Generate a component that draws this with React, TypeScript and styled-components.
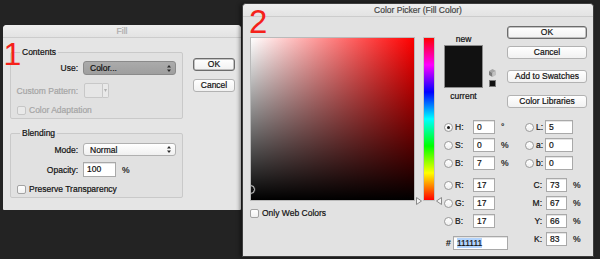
import * as React from 'react';
import styled, { createGlobalStyle } from 'styled-components';

const GlobalStyle = createGlobalStyle`
  html, body {
    margin: 0;
    padding: 0;
    background: #222;
  }
  body {
    font-family: 'Liberation Sans', Arial, sans-serif;
    font-size: 8.5px;
    color: #111111;
    -webkit-text-stroke: 0.2px currentColor;
  }
  * {
    box-sizing: border-box;
  }
`;

const Desktop = styled.div`
  position: relative;
  width: 600px;
  height: 259px;
  overflow: hidden;
  background: #232323;
`;

const Window = styled.div<{ $x: number; $y: number; $w: number; $h: number; $front?: boolean }>`
  position: absolute;
  left: ${p => p.$x}px;
  top: ${p => p.$y}px;
  width: ${p => p.$w}px;
  height: ${p => p.$h}px;
  display: flex;
  flex-direction: column;
  background: ${p => (p.$front ? '#e2e2e2' : '#e5e5e5')};
  border: ${p => (p.$front ? '1px solid #3e3e3e' : 'none')};
  border-radius: 4px 4px 1px 1px;
  box-shadow: ${p => (p.$front ? '-2px 0 4px rgba(0, 0, 0, 0.45)' : 'none')};
`;

const TitleBar = styled.div<{ $h: number; $dim?: boolean }>`
  flex: none;
  height: ${p => p.$h}px;
  line-height: ${p => p.$h - 1}px;
  text-align: center;
  color: ${p => (p.$dim ? '#ababab' : '#464646')};
  background: linear-gradient(#eeeeee, #e3e3e3);
  border-bottom: 1px solid #cccccc;
  border-radius: 4px 4px 0 0;
`;

const Annotation = styled.div<{ $x: number; $y: number; $size: number }>`
  position: absolute;
  left: ${p => p.$x}px;
  top: ${p => p.$y}px;
  font-size: ${p => p.$size}px;
  line-height: 1;
  color: #f5211a;
  -webkit-text-stroke: 0;
`;

/* ---------- shared controls ---------- */

const PushButton = styled.div<{ $primary?: boolean; $mt?: number }>`
  height: 13px;
  margin-top: ${p => p.$mt ?? 0}px;
  line-height: 11px;
  text-align: center;
  background: linear-gradient(#ffffff, #f1f1f1);
  border: 1px solid ${p => (p.$primary ? '#6c6c6c' : '#b2b2b2')};
  box-shadow: ${p => (p.$primary ? 'inset 0 0 0 0.5px #8a8a8a' : 'none')};
  border-radius: 3px;
`;

const ButtonStack = styled.div<{ $w: number; $ml: number; $mt: number }>`
  flex: none;
  display: flex;
  flex-direction: column;
  width: ${p => p.$w}px;
  margin-left: ${p => p.$ml}px;
  margin-top: ${p => p.$mt}px;
`;

const CheckRow = styled.div<{ $pl?: number; $mt?: number; $mb?: number }>`
  display: flex;
  align-items: center;
  height: 12px;
  padding-left: ${p => p.$pl ?? 0}px;
  margin-top: ${p => p.$mt ?? 0}px;
  margin-bottom: ${p => p.$mb ?? 0}px;
`;

const CheckBox = styled.span<{ $disabled?: boolean }>`
  flex: none;
  width: 9px;
  height: 9px;
  border: 1px solid ${p => (p.$disabled ? '#c6c6c6' : '#a3a3a3')};
  border-radius: 2px;
  background: ${p => (p.$disabled ? '#e9e9e9' : 'linear-gradient(#ffffff, #f1f1f1)')};
`;

const CheckText = styled.span<{ $dim?: boolean }>`
  margin-left: 3px;
  color: ${p => (p.$dim ? '#a5a5a5' : '#111111')};
`;

const TextField = styled.div<{ $w: number; $h?: number }>`
  flex: none;
  width: ${p => p.$w}px;
  height: ${p => p.$h ?? 14}px;
  padding-left: 3px;
  line-height: ${p => (p.$h ?? 14) - 2}px;
  background: #ffffff;
  border: 1px solid #a9a9a9;
  box-shadow: inset 0 1px 0 #e4e4e4;
`;

/* ---------- Fill dialog ---------- */

const FillBody = styled.div`
  display: flex;
  padding-top: 8px;
`;

const Groups = styled.div`
  flex: none;
  width: 173px;
  margin-left: 7px;
  display: flex;
  flex-direction: column;
  gap: 8px;
`;

const Group = styled.fieldset`
  margin: 0;
  padding: 0;
  min-width: 0;
  border: 1px solid #c9c9c9;
  border-radius: 2px;
  background: #e1e1e1;
`;

const Legend = styled.legend`
  margin-left: 9px;
  padding: 0 2px;
  line-height: 12px;
`;

const FormRow = styled.div<{ $h: number; $mt?: number; $mb?: number }>`
  display: flex;
  align-items: center;
  height: ${p => p.$h}px;
  margin-top: ${p => p.$mt ?? 0}px;
  margin-bottom: ${p => p.$mb ?? 0}px;
`;

const FormLabel = styled.span<{ $dim?: boolean }>`
  flex: none;
  width: 67px;
  margin-right: 5px;
  text-align: right;
  white-space: nowrap;
  color: ${p => (p.$dim ? '#a5a5a5' : '#111111')};
`;

const Popup = styled.div<{ $grey?: boolean }>`
  flex: none;
  display: flex;
  align-items: center;
  justify-content: space-between;
  width: 93px;
  height: 100%;
  padding: 0 4px 0 6px;
  border: 1px solid ${p => (p.$grey ? '#8a8a8a' : '#b0b0b0')};
  border-radius: 3px;
  background: ${p => (p.$grey ? 'linear-gradient(#ababab, #9e9e9e)' : 'linear-gradient(#ffffff, #f0f0f0)')};
`;

const PatternWell = styled.div`
  flex: none;
  width: 19px;
  height: 15px;
  margin-left: 1px;
  border: 1px solid #c8c8c8;
  border-radius: 2px 0 0 2px;
  background: #e6e6e6;
`;

const PatternArrow = styled.div`
  flex: none;
  display: flex;
  align-items: center;
  justify-content: center;
  width: 6px;
  height: 15px;
  border: 1px solid #c8c8c8;
  border-left: none;
  border-radius: 0 2px 2px 0;
  background: #e9e9e9;
`;

const Unit = styled.span<{ $ml: number }>`
  margin-left: ${p => p.$ml}px;
`;

const UpDown = () => (
  <svg width="4" height="7" viewBox="0 0 4 7">
    <path d="M2 0 L4 2.5 H0 Z M2 7 L4 4.5 H0 Z" fill="#2a2a2a" />
  </svg>
);

/* ---------- Color picker ---------- */

const PickerBody = styled.div`
  display: flex;
  padding-left: 7px;
`;

const FieldColumn = styled.div`
  flex: none;
  margin-top: 20px;
`;

const SatField = styled.div`
  position: relative;
  width: 165px;
  height: 164px;
  overflow: hidden;
  border: 1px solid #bababa;
  background: linear-gradient(to bottom, rgba(0, 0, 0, 0), #000000),
    linear-gradient(to right, #ffffff, #ff0000);
`;

const Marker = styled.span`
  position: absolute;
  left: -5px;
  top: 147px;
  width: 9px;
  height: 9px;
  border-radius: 50%;
  border: 1.5px solid #d8d8d8;
  box-shadow: 0 0 0 0.5px #444;
`;

const HueColumn = styled.div`
  position: relative;
  flex: none;
  width: 12px;
  height: 164px;
  margin-left: 8px;
  margin-top: 20px;
  border: 1px solid #c4c4c4;
  background: linear-gradient(#ff0000, #ff00ff, #0000ff, #00ffff, #00ff00, #ffff00, #ff0000);
`;

const Handle = styled.svg<{ $side: 'left' | 'right' }>`
  position: absolute;
  top: 159px;
  ${p => (p.$side === 'left' ? 'left: -8px;' : 'right: -8px;')}
`;

const SidePanel = styled.div`
  flex: none;
  margin-left: 9px;
  margin-top: 9px;
  display: flex;
  flex-direction: column;
`;

const SideTop = styled.div`
  display: flex;
`;

const SwatchColumn = styled.div`
  flex: none;
  width: 56px;
  display: flex;
  flex-direction: column;
`;

const SwatchCaption = styled.div<{ $mt: number }>`
  width: 39px;
  margin-top: ${p => p.$mt}px;
  line-height: 10px;
  text-align: center;
`;

const SwatchRow = styled.div`
  display: flex;
  margin-top: 1px;
`;

const Swatch = styled.div`
  flex: none;
  width: 39px;
  height: 43px;
  border: 1px solid #8c8c8c;
  background: #111111;
`;

const WarnIcons = styled.div`
  display: flex;
  flex-direction: column;
  align-items: center;
  justify-content: flex-end;
  gap: 3px;
  margin-left: 6px;
  padding-bottom: 1px;
`;

const WebSquare = styled.span`
  width: 7px;
  height: 7px;
  border: 1px solid #7a7a7a;
  background: #111111;
`;

const FieldsArea = styled.div`
  display: flex;
  margin-top: 10px;
`;

const FieldCol = styled.div<{ $w?: number }>`
  flex: none;
  width: ${p => (p.$w ? `${p.$w}px` : 'auto')};
  display: flex;
  flex-direction: column;
`;

const FieldRow = styled.div<{ $gap?: number }>`
  display: flex;
  align-items: center;
  height: 18px;
  margin-top: ${p => p.$gap ?? 0}px;
`;

const Radio = styled.span<{ $on?: boolean }>`
  flex: none;
  position: relative;
  width: 9px;
  height: 9px;
  border-radius: 50%;
  border: 1px solid #9b9b9b;
  background: linear-gradient(#ffffff, #efefef);
  &::after {
    content: '';
    display: ${p => (p.$on ? 'block' : 'none')};
    position: absolute;
    left: 2px;
    top: 2px;
    width: 3px;
    height: 3px;
    border-radius: 50%;
    background: #1a1a1a;
  }
`;

const FieldLabel = styled.span<{ $w: number; $ml?: number; $mr?: number; $right?: boolean }>`
  flex: none;
  width: ${p => p.$w}px;
  margin-left: ${p => p.$ml ?? 0}px;
  margin-right: ${p => p.$mr ?? 0}px;
  text-align: ${p => (p.$right ? 'right' : 'left')};
`;

const Selected = styled.span`
  background: #b3d4fc;
`;

const Cube = () => (
  <svg width="7" height="8" viewBox="0 0 7 8">
    <path d="M3.5 0 L7 2 L3.5 4 L0 2 Z" fill="#a6a6a6" />
    <path d="M0 2 L3.5 4 L3.5 8 L0 6 Z" fill="#7c7c7c" />
    <path d="M7 2 L3.5 4 L3.5 8 L7 6 Z" fill="#c2c2c2" />
  </svg>
);

const hsbRows = [
  { key: 'H', value: '0', unit: '°', on: true },
  { key: 'S', value: '0', unit: '%' },
  { key: 'B', value: '7', unit: '%' },
];
const rgbRows = [
  { key: 'R', value: '17' },
  { key: 'G', value: '17' },
  { key: 'B', value: '17' },
];
const labRows = [
  { key: 'L', value: '5' },
  { key: 'a', value: '0' },
  { key: 'b', value: '0' },
];
const cmykRows = [
  { key: 'C', value: '73' },
  { key: 'M', value: '67' },
  { key: 'Y', value: '66' },
  { key: 'K', value: '83' },
];

const FillDialog = () => (
  <Window $x={3} $y={25} $w={238} $h={185}>
    <TitleBar $h={13} $dim>
      Fill
    </TitleBar>
    <FillBody>
      <Groups>
        <Group>
          <Legend>Contents</Legend>
          <FormRow $h={14} $mt={3} $mb={8}>
            <FormLabel>Use:</FormLabel>
            <Popup $grey>
              <span>Color...</span>
              <UpDown />
            </Popup>
          </FormRow>
          <FormRow $h={15} $mb={6}>
            <FormLabel $dim>Custom Pattern:</FormLabel>
            <PatternWell />
            <PatternArrow>
              <svg width="3" height="3" viewBox="0 0 3 3">
                <path d="M0 0 H3 L1.5 3 Z" fill="#b0b0b0" />
              </svg>
            </PatternArrow>
          </FormRow>
          <CheckRow $pl={6} $mb={2}>
            <CheckBox $disabled />
            <CheckText $dim>Color Adaptation</CheckText>
          </CheckRow>
        </Group>
        <Group>
          <Legend>Blending</Legend>
          <FormRow $h={13} $mt={4} $mb={6}>
            <FormLabel>Mode:</FormLabel>
            <Popup>
              <span>Normal</span>
              <UpDown />
            </Popup>
          </FormRow>
          <FormRow $h={15} $mb={6}>
            <FormLabel>Opacity:</FormLabel>
            <TextField $w={33} $h={15}>
              100
            </TextField>
            <Unit $ml={6}>%</Unit>
          </FormRow>
          <CheckRow $pl={6} $mb={2}>
            <CheckBox />
            <CheckText>Preserve Transparency</CheckText>
          </CheckRow>
        </Group>
      </Groups>
      <ButtonStack $w={42} $ml={10} $mt={12}>
        <PushButton $primary>OK</PushButton>
        <PushButton $mt={8}>Cancel</PushButton>
      </ButtonStack>
    </FillBody>
    <Annotation $x={0.5} $y={13} $size={32}>
      1
    </Annotation>
  </Window>
);

const ColorPicker = () => (
  <Window $x={242} $y={3} $w={352} $h={254} $front>
    <TitleBar $h={13}>Color Picker (Fill Color)</TitleBar>
    <PickerBody>
      <FieldColumn>
        <SatField>
          <Marker />
        </SatField>
        <CheckRow $mt={6}>
          <CheckBox />
          <CheckText>Only Web Colors</CheckText>
        </CheckRow>
      </FieldColumn>
      <HueColumn>
        <Handle $side="left" width="6" height="8" viewBox="0 0 6 8">
          <path d="M0.5 0.5 L5.5 4 L0.5 7.5 Z" fill="#f4f4f4" stroke="#8a8a8a" strokeWidth="1" />
        </Handle>
        <Handle $side="right" width="6" height="8" viewBox="0 0 6 8">
          <path d="M5.5 0.5 L0.5 4 L5.5 7.5 Z" fill="#f4f4f4" stroke="#8a8a8a" strokeWidth="1" />
        </Handle>
      </HueColumn>
      <SidePanel>
        <SideTop>
          <SwatchColumn>
            <SwatchCaption $mt={8}>new</SwatchCaption>
            <SwatchRow>
              <Swatch />
              <WarnIcons>
                <Cube />
                <WebSquare />
              </WarnIcons>
            </SwatchRow>
            <SwatchCaption $mt={3}>current</SwatchCaption>
          </SwatchColumn>
          <ButtonStack $w={80} $ml={7} $mt={0}>
            <PushButton $primary>OK</PushButton>
            <PushButton $mt={7}>Cancel</PushButton>
            <PushButton $mt={11}>Add to Swatches</PushButton>
            <PushButton $mt={12}>Color Libraries</PushButton>
          </ButtonStack>
        </SideTop>
        <FieldsArea>
          <FieldCol $w={81}>
            {hsbRows.map(r => (
              <FieldRow key={'hsb' + r.key}>
                <Radio $on={r.on} />
                <FieldLabel $w={18} $ml={2}>
                  {r.key}:
                </FieldLabel>
                <TextField $w={22}>{r.value}</TextField>
                <Unit $ml={6}>{r.unit}</Unit>
              </FieldRow>
            ))}
            {rgbRows.map((r, i) => (
              <FieldRow key={'rgb' + i} $gap={i === 0 ? 4 : 0}>
                <Radio />
                <FieldLabel $w={18} $ml={2}>
                  {r.key}:
                </FieldLabel>
                <TextField $w={22}>{r.value}</TextField>
              </FieldRow>
            ))}
            <FieldRow $gap={4}>
              <FieldLabel $w={7} $ml={2}>
                #
              </FieldLabel>
              <TextField $w={55}>
                <Selected>111111</Selected>
              </TextField>
            </FieldRow>
          </FieldCol>
          <FieldCol>
            {labRows.map(r => (
              <FieldRow key={'lab' + r.key}>
                <Radio />
                <FieldLabel $w={9} $ml={2}>
                  {r.key}:
                </FieldLabel>
                <TextField $w={28}>{r.value}</TextField>
              </FieldRow>
            ))}
            {cmykRows.map((r, i) => (
              <FieldRow key={'cmyk' + r.key} $gap={i === 0 ? 4 : 0}>
                <FieldLabel $w={17} $mr={4} $right>
                  {r.key}:
                </FieldLabel>
                <TextField $w={21}>{r.value}</TextField>
                <Unit $ml={6}>%</Unit>
              </FieldRow>
            ))}
          </FieldCol>
        </FieldsArea>
      </SidePanel>
    </PickerBody>
    <Annotation $x={6} $y={0.5} $size={33}>
      2
    </Annotation>
  </Window>
);

export default function App() {
  return (
    <>
      <GlobalStyle />
      <Desktop>
        <FillDialog />
        <ColorPicker />
      </Desktop>
    </>
  );
}
